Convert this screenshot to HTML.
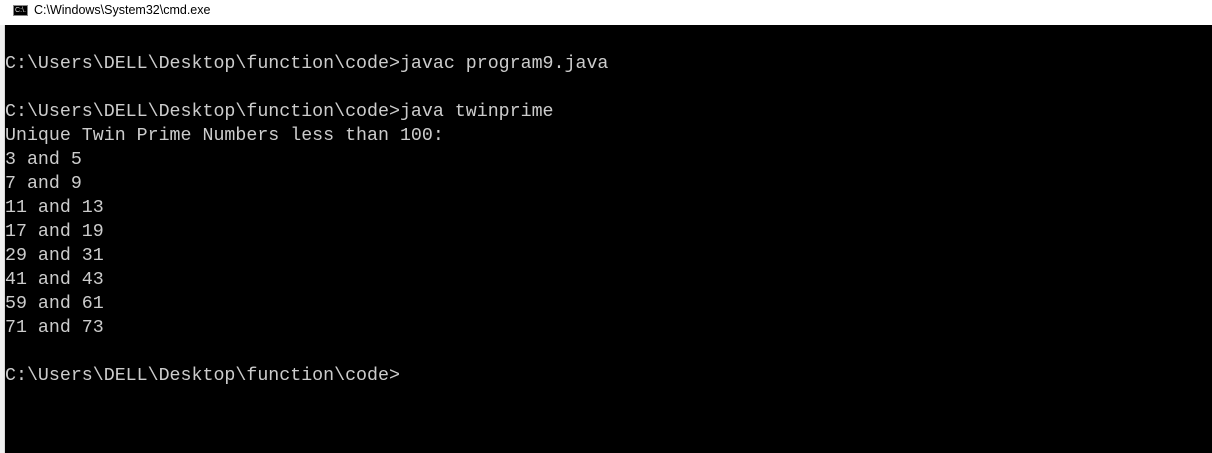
<!DOCTYPE html>
<html><head><style>
html,body{margin:0;padding:0;width:1212px;height:453px;overflow:hidden;background:#fff;}
.title{position:absolute;left:0;top:0;width:1212px;height:25px;background:#fff;}
.icon{position:absolute;left:13px;top:5px;width:15px;height:11px;background:#000;border:1px solid #888;box-sizing:border-box;color:#ddd;font:7px "Liberation Sans",sans-serif;line-height:9px;text-align:center;}
.ttext{position:absolute;left:34px;top:3px;font:12.5px "Liberation Sans",sans-serif;color:#000;}
.strip{position:absolute;left:0;top:25px;width:5px;height:428px;background:#f0f0f0;border-right:1px solid #d8d8d8;box-sizing:border-box;}
.con{position:absolute;left:5px;top:25px;width:1207px;height:428px;background:#000;}
pre{position:absolute;left:5px;top:52px;margin:0;font:18.3px "Liberation Mono",monospace;line-height:24px;color:#cccccc;}
</style></head><body>
<div class="title"><div class="icon">C:\.</div><div class="ttext">C:\Windows\System32\cmd.exe</div></div>
<div class="strip"></div>
<div class="con"></div>
<pre>C:\Users\DELL\Desktop\function\code>javac program9.java

C:\Users\DELL\Desktop\function\code>java twinprime
Unique Twin Prime Numbers less than 100:
3 and 5
7 and 9
11 and 13
17 and 19
29 and 31
41 and 43
59 and 61
71 and 73

C:\Users\DELL\Desktop\function\code></pre>
</body></html>
